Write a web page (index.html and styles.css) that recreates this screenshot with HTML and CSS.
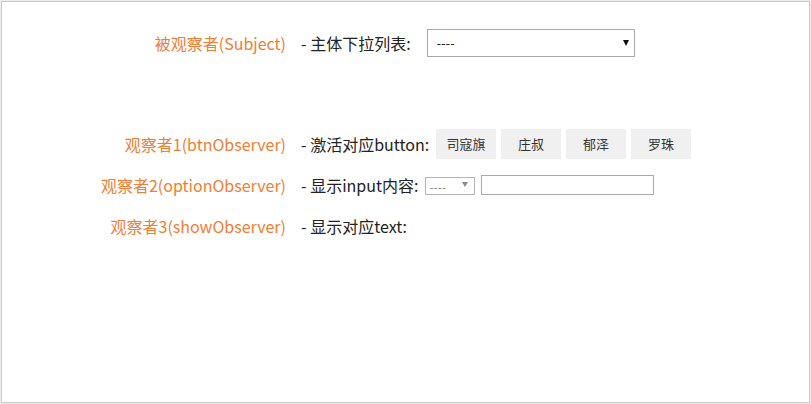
FILE: index.html
```html
<!doctype html>
<html lang="zh-CN">
  <head>
    <meta charset="UTF-8" />
    <meta name="viewport" content="width=device-width, initial-scale=1.0" />
    <title>观察者模式</title>
    <link rel="stylesheet" href="styles.css">
  </head>
  <body>
    <div class="frame">
      <div class="row row-subject">
        <div class="label">被观察者(Subject)</div>
        <div class="content">
          <span class="desc">- 主体下拉列表:</span>
          <span class="select-wrap big">
            <select id="subject">
              <option>----</option>
              <option>司寇旗</option>
              <option>庄叔</option>
              <option>郁泽</option>
              <option>罗珠</option>
            </select>
          </span>
        </div>
      </div>

      <div class="row">
        <div class="label">观察者1(btnObserver)</div>
        <div class="content">
          <span class="desc">- 激活对应button:</span>
          <div class="btns">
            <button>司寇旗</button>
            <button>庄叔</button>
            <button>郁泽</button>
            <button>罗珠</button>
          </div>
        </div>
      </div>

      <div class="row">
        <div class="label">观察者2(optionObserver)</div>
        <div class="content">
          <span class="desc">- 显示input内容:</span>
          <span class="select-wrap small">
            <select>
              <option>----</option>
            </select>
          </span>
          <input type="text" class="show-input" />
        </div>
      </div>

      <div class="row">
        <div class="label">观察者3(showObserver)</div>
        <div class="content">
          <span class="desc">- 显示对应text:</span>
        </div>
      </div>
    </div>
  </body>
</html>
```

FILE: styles.css
```css
/* page frame */
html,
body {
  margin: 0;
  padding: 0;
  background: #ededed;
}
body {
  padding: 1px;
  font-family: "Microsoft YaHei", "Noto Sans CJK SC", "Noto Sans", sans-serif;
}
.frame {
  box-sizing: border-box;
  width: 809px;
  height: 402px;
  border: 1px solid #c9c9c9;
  background: #fff;
  padding-top: 20px;
}

/* rows */
.row {
  display: flex;
  align-items: center;
  height: 41px;
}
.row-subject {
  margin-bottom: 60px;
}
.label {
  width: 284px;
  text-align: right;
  color: #f07d34;
  font-size: 16px;
  white-space: nowrap;
}
.content {
  display: flex;
  align-items: center;
  margin-left: 15px;
}
.desc {
  color: #222;
  font-size: 16px;
  white-space: nowrap;
  margin-right: 7px;
}

/* selects */
.select-wrap {
  position: relative;
  display: inline-block;
}
.select-wrap select {
  appearance: none;
  -webkit-appearance: none;
  box-sizing: border-box;
  background: #fff;
  border: 1px solid #a9a9a9;
  border-radius: 0;
  font-family: inherit;
  outline: none;
}
.select-wrap::after {
  content: "";
  position: absolute;
  top: 50%;
  border-left: 3.5px solid transparent;
  border-right: 3.5px solid transparent;
  pointer-events: none;
}
.big {
  margin-left: 9px;
}
.big select {
  width: 208px;
  height: 28px;
  padding: 0 9px;
  font-size: 13px;
  color: #222;
}
.big::after {
  right: 6px;
  margin-top: -3px;
  border-top: 6px solid #111;
}
.small select {
  width: 50px;
  height: 18px;
  padding: 0 3px;
  font-size: 12px;
  color: #888;
  border-color: #b5b5b5;
}
.small::after {
  right: 7px;
  margin-top: -2.5px;
  border-top: 5px solid #888;
}
.show-input {
  box-sizing: border-box;
  width: 173px;
  height: 20px;
  margin-left: 6px;
  border: 1px solid #a9a9a9;
  padding: 0 4px;
}

/* buttons */
.btns {
  display: flex;
  gap: 5px;
}
.btns button {
  width: 60px;
  height: 30px;
  padding: 0;
  border: none;
  border-radius: 0;
  background: #f0f0f0;
  color: #333;
  font-family: inherit;
  font-size: 13px;
  cursor: pointer;
}
.btns button:hover {
  background: #e4e4e4;
}
```
